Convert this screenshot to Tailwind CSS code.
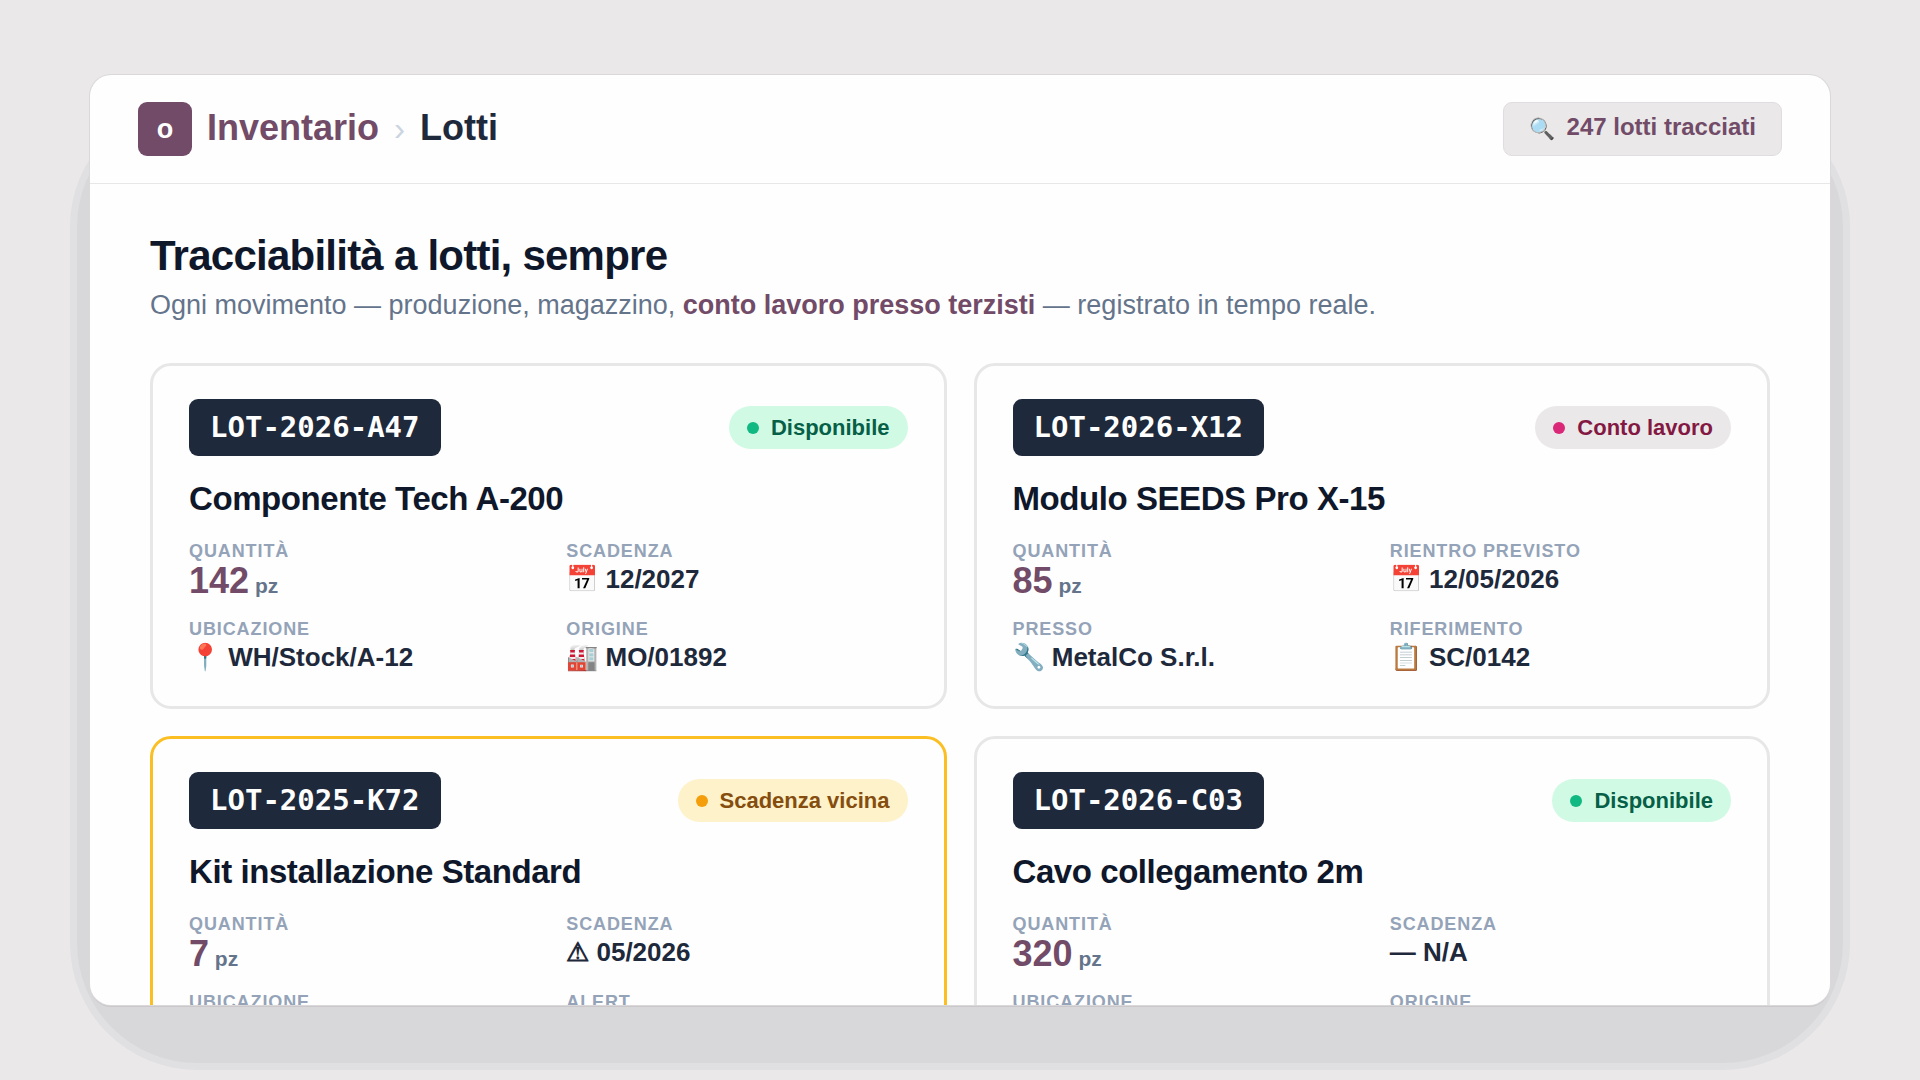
<!DOCTYPE html>
<html lang="it">
<head>
    <meta charset="UTF-8">
    <meta name="viewport" content="width=device-width, initial-scale=1.0">
    <title>Inventario › Lotti</title>
    <script src="https://cdn.jsdelivr.net/npm/@tailwindcss/browser@4"></script>
</head>
<body class="bg-[#eae8e9] font-['Liberation_Sans',Arial,sans-serif] text-[#1e293b]">
    <div class="h-screen overflow-hidden px-[90px] py-[75px]">
        <div class="relative h-full">
            <!-- Window shadow -->
            <div class="absolute -inset-x-[13px] top-8 -bottom-[58px] rounded-[120px] bg-[#d8d8da] shadow-[0_0_0_7px_#e0dfe1]"></div>

            <!-- Window -->
            <div class="relative h-full overflow-hidden rounded-[21px] bg-[#fefefe] shadow-[0_0_0_1px_#dad8d9,0_2px_0_#cac8ca]">
                <header class="flex items-center justify-between border-b border-[#e8e7e8] px-12 py-[27px]">
                    <nav class="flex items-center gap-[15px] text-4xl font-bold">
                        <span class="flex size-[54px] items-center justify-center rounded-[9px] bg-[#714b67] text-[27px] text-white">o</span>
                        <a href="#" class="pb-0.5 text-[#714b67]">Inventario</a>
                        <span class="text-[33px] leading-10 font-normal text-[#cbd5e1]">›</span>
                        <span class="pb-0.5">Lotti</span>
                    </nav>
                    <div class="flex h-[54px] items-center gap-3 rounded-[9px] border border-[#dfdddf] bg-[#eae8e9] px-[25px] text-2xl font-bold text-[#714b67]">
                        <span class="text-[21px]">🔍</span>
                        <span class="pb-1">247 lotti tracciati</span>
                    </div>
                </header>

                <main class="px-[60px] pt-12">
                    <h1 class="text-[42px] leading-12 font-bold tracking-[-0.018em] text-[#0f172a]">Tracciabilità a lotti, sempre</h1>
                    <p class="mt-[9px] text-[27px] leading-8 text-[#64748b]">Ogni movimento — produzione, magazzino, <strong class="text-[#714b67]">conto lavoro presso terzisti</strong> — registrato in tempo reale.</p>

                    <div class="mt-[42px] grid grid-cols-2 gap-[27px]">
                        <!-- LOT-2026-A47 -->
                        <article class="rounded-[21px] border-3 border-[#e8e7e8] px-9 pt-[33px] pb-[31px]">
                            <div class="flex items-center justify-between">
                                <span class="rounded-[9px] bg-[#1e293b] px-[21px] pb-px font-['DejaVu_Sans_Mono',monospace] text-[29px] leading-[56px] font-bold text-white">LOT-2026-A47</span>
                                <span class="flex items-center gap-3 rounded-full bg-[#d1fae5] px-[18px] text-[22px] leading-[43px] font-bold text-[#065f46]"><i class="size-3 rounded-full bg-[#10b981]"></i>Disponibile</span>
                            </div>
                            <h2 class="mt-6 text-[33px] leading-[38px] font-bold tracking-[-0.013em] text-[#0f172a]">Componente Tech A-200</h2>
                            <dl class="mt-[23px] grid grid-cols-2 gap-x-9 gap-y-[22px] text-[26px] leading-7 font-bold">
                                <div>
                                    <dt class="mb-[3px] text-lg leading-[21px] tracking-wider text-[#94a3b8]">QUANTITÀ</dt>
                                    <dd class="h-8 text-4xl leading-8 text-[#714b67]">142<span class="text-[21px] text-[#64748b]"> pz</span></dd>
                                </div>
                                <div>
                                    <dt class="mb-[3px] text-lg leading-[21px] tracking-wider text-[#94a3b8]">SCADENZA</dt>
                                    <dd class="h-8">📅 12/2027</dd>
                                </div>
                                <div>
                                    <dt class="mb-[3px] text-lg leading-[21px] tracking-wider text-[#94a3b8]">UBICAZIONE</dt>
                                    <dd class="h-8">📍 WH/Stock/A-12</dd>
                                </div>
                                <div>
                                    <dt class="mb-[3px] text-lg leading-[21px] tracking-wider text-[#94a3b8]">ORIGINE</dt>
                                    <dd class="h-8">🏭 MO/01892</dd>
                                </div>
                            </dl>
                        </article>

                        <!-- LOT-2026-X12 -->
                        <article class="rounded-[21px] border-3 border-[#e8e7e8] px-9 pt-[33px] pb-[31px]">
                            <div class="flex items-center justify-between">
                                <span class="rounded-[9px] bg-[#1e293b] px-[21px] pb-px font-['DejaVu_Sans_Mono',monospace] text-[29px] leading-[56px] font-bold text-white">LOT-2026-X12</span>
                                <span class="flex items-center gap-3 rounded-full bg-[#eae8e9] px-[18px] text-[22px] leading-[43px] font-bold text-[#831843]"><i class="size-3 rounded-full bg-[#db2777]"></i>Conto lavoro</span>
                            </div>
                            <h2 class="mt-6 text-[33px] leading-[38px] font-bold tracking-[-0.013em] text-[#0f172a]">Modulo SEEDS Pro X-15</h2>
                            <dl class="mt-[23px] grid grid-cols-2 gap-x-9 gap-y-[22px] text-[26px] leading-7 font-bold">
                                <div>
                                    <dt class="mb-[3px] text-lg leading-[21px] tracking-wider text-[#94a3b8]">QUANTITÀ</dt>
                                    <dd class="h-8 text-4xl leading-8 text-[#714b67]">85<span class="text-[21px] text-[#64748b]"> pz</span></dd>
                                </div>
                                <div>
                                    <dt class="mb-[3px] text-lg leading-[21px] tracking-wider text-[#94a3b8]">RIENTRO PREVISTO</dt>
                                    <dd class="h-8">📅 12/05/2026</dd>
                                </div>
                                <div>
                                    <dt class="mb-[3px] text-lg leading-[21px] tracking-wider text-[#94a3b8]">PRESSO</dt>
                                    <dd class="h-8">🔧 MetalCo S.r.l.</dd>
                                </div>
                                <div>
                                    <dt class="mb-[3px] text-lg leading-[21px] tracking-wider text-[#94a3b8]">RIFERIMENTO</dt>
                                    <dd class="h-8">📋 SC/0142</dd>
                                </div>
                            </dl>
                        </article>

                        <!-- LOT-2025-K72 -->
                        <article class="rounded-[21px] border-3 border-[#fbbf24] px-9 pt-[33px] pb-[31px]">
                            <div class="flex items-center justify-between">
                                <span class="rounded-[9px] bg-[#1e293b] px-[21px] pb-px font-['DejaVu_Sans_Mono',monospace] text-[29px] leading-[56px] font-bold text-white">LOT-2025-K72</span>
                                <span class="flex items-center gap-3 rounded-full bg-[#fdf2c9] px-[18px] text-[22px] leading-[43px] font-bold text-[#854d0e]"><i class="size-3 rounded-full bg-[#f59e0b]"></i>Scadenza vicina</span>
                            </div>
                            <h2 class="mt-6 text-[33px] leading-[38px] font-bold tracking-[-0.013em] text-[#0f172a]">Kit installazione Standard</h2>
                            <dl class="mt-[23px] grid grid-cols-2 gap-x-9 gap-y-[22px] text-[26px] leading-7 font-bold">
                                <div>
                                    <dt class="mb-[3px] text-lg leading-[21px] tracking-wider text-[#94a3b8]">QUANTITÀ</dt>
                                    <dd class="h-8 text-4xl leading-8 text-[#714b67]">7<span class="text-[21px] text-[#64748b]"> pz</span></dd>
                                </div>
                                <div>
                                    <dt class="mb-[3px] text-lg leading-[21px] tracking-wider text-[#94a3b8]">SCADENZA</dt>
                                    <dd class="h-8">⚠ 05/2026</dd>
                                </div>
                                <div>
                                    <dt class="mb-[3px] text-lg leading-[21px] tracking-wider text-[#94a3b8]">UBICAZIONE</dt>
                                    <dd class="h-8"></dd>
                                </div>
                                <div>
                                    <dt class="mb-[3px] text-lg leading-[21px] tracking-wider text-[#94a3b8]">ALERT</dt>
                                    <dd class="h-8"></dd>
                                </div>
                            </dl>
                        </article>

                        <!-- LOT-2026-C03 -->
                        <article class="rounded-[21px] border-3 border-[#e8e7e8] px-9 pt-[33px] pb-[31px]">
                            <div class="flex items-center justify-between">
                                <span class="rounded-[9px] bg-[#1e293b] px-[21px] pb-px font-['DejaVu_Sans_Mono',monospace] text-[29px] leading-[56px] font-bold text-white">LOT-2026-C03</span>
                                <span class="flex items-center gap-3 rounded-full bg-[#d1fae5] px-[18px] text-[22px] leading-[43px] font-bold text-[#065f46]"><i class="size-3 rounded-full bg-[#10b981]"></i>Disponibile</span>
                            </div>
                            <h2 class="mt-6 text-[33px] leading-[38px] font-bold tracking-[-0.013em] text-[#0f172a]">Cavo collegamento 2m</h2>
                            <dl class="mt-[23px] grid grid-cols-2 gap-x-9 gap-y-[22px] text-[26px] leading-7 font-bold">
                                <div>
                                    <dt class="mb-[3px] text-lg leading-[21px] tracking-wider text-[#94a3b8]">QUANTITÀ</dt>
                                    <dd class="h-8 text-4xl leading-8 text-[#714b67]">320<span class="text-[21px] text-[#64748b]"> pz</span></dd>
                                </div>
                                <div>
                                    <dt class="mb-[3px] text-lg leading-[21px] tracking-wider text-[#94a3b8]">SCADENZA</dt>
                                    <dd class="h-8">— N/A</dd>
                                </div>
                                <div>
                                    <dt class="mb-[3px] text-lg leading-[21px] tracking-wider text-[#94a3b8]">UBICAZIONE</dt>
                                    <dd class="h-8"></dd>
                                </div>
                                <div>
                                    <dt class="mb-[3px] text-lg leading-[21px] tracking-wider text-[#94a3b8]">ORIGINE</dt>
                                    <dd class="h-8"></dd>
                                </div>
                            </dl>
                        </article>
                    </div>
                </main>
            </div>
        </div>
    </div>
</body>
</html>
